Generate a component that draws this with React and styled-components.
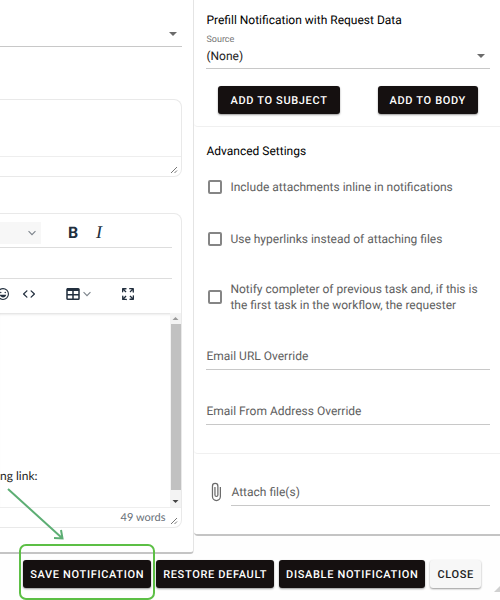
import { useState } from "react";
import styled, { createGlobalStyle } from "styled-components";

const icons = {
    emoji: "M9 11c.6 0 1-.4 1-1s-.4-1-1-1a1 1 0 0 0-1 1c0 .6.4 1 1 1Zm6 0c.6 0 1-.4 1-1s-.4-1-1-1a1 1 0 0 0-1 1c0 .6.4 1 1 1Zm-3 5.5c2.1 0 4-1.5 4.4-3.5H7.6c.5 2 2.3 3.5 4.4 3.5ZM12 4a8 8 0 1 0 0 16 8 8 0 0 0 0-16Zm0 14.5a6.5 6.5 0 1 1 0-13 6.5 6.5 0 0 1 0 13Z",
    code: "M9.8 15.7c.3.3.3.8 0 1-.3.4-.9.4-1.2 0l-4.4-4.1a.8.8 0 0 1 0-1.2l4.4-4.2c.3-.3.9-.3 1.2 0 .3.3.3.8 0 1.1L6 12l3.8 3.7ZM14.2 15.7c-.3.3-.3.8 0 1 .4.4.9.4 1.2 0l4.4-4.1c.3-.3.3-.9 0-1.2l-4.4-4.2a.8.8 0 0 0-1.2 0c-.3.3-.3.8 0 1.1L18 12l-3.8 3.7Z",
    table: "M19 4a2 2 0 0 1 2 2v12a2 2 0 0 1-2 2H5a2 2 0 0 1-2-2V6c0-1.1.9-2 2-2h14ZM5 14v4h6v-4H5Zm14 0h-6v4h6v-4Zm0-6h-6v4h6V8ZM5 12h6V8H5v4Z",
    fullscreen: "m15.3 10-1.2-1.3 2.9-3h-2.3a.9.9 0 1 1 0-1.7H19c.5 0 .9.4.9.9v4.4a.9.9 0 1 1-1.8 0V7l-2.9 3Zm0 4 3 3v-2.3a.9.9 0 1 1 1.7 0V19c0 .5-.4.9-.9.9h-4.4a.9.9 0 1 1 0-1.8H17l-3-2.9 1.3-1.2ZM10 15.4l-2.9 3h2.3a.9.9 0 1 1 0 1.7H5a.9.9 0 0 1-.9-.9v-4.4a.9.9 0 1 1 1.8 0V17l2.9-3 1.2 1.3ZM8.7 10 5.7 7v2.3a.9.9 0 0 1-1.7 0V5c0-.5.4-.9.9-.9h4.4a.9.9 0 0 1 0 1.8H7l3 2.9-1.3 1.2Z",
    clip: "M16.5 6v11.5a4 4 0 0 1-8 0V5a2.5 2.5 0 0 1 5 0v10.5a1 1 0 0 1-2 0V6H10v9.5a2.5 2.5 0 0 0 5 0V5a4 4 0 0 0-8 0v12.5a5.5 5.5 0 0 0 11 0V6h-1.5Z"
};

const options = [
    { id: "inline", text: "Include attachments inline in notifications" },
    { id: "hyperlinks", text: "Use hyperlinks instead of attaching files" },
    { id: "completer", text: "Notify completer of previous task and, if this is the first task in the workflow, the requester" }
];

function Icon({ name, size = 18 }) {
    return (
        <svg width={size} height={size} viewBox="0 0 24 24" fill="currentColor" aria-hidden="true">
            <path d={icons[name]} />
        </svg>
    )
}

function Chevron() {
    return (
        <svg width="8" height="8" viewBox="0 0 10 10" fill="none" stroke="#7d848c" strokeWidth="1.4" aria-hidden="true">
            <path d="M0.7 2.7 5 7.2 9.3 2.7" />
        </svg>
    )
}

function ResizeGrip() {
    return (
        <svg width="8" height="8" viewBox="0 0 8 8" stroke="#777777" aria-hidden="true">
            <path d="M1 7 7 1M4.500 7 7 4.500" />
        </svg>
    )
}

export default function App() {
    const [checked, setChecked] = useState({});

    function toggle(id) {
        setChecked({ ...checked, [id]: !checked[id] });
    }

    return (
        <>
            <GlobalStyle />
            <Columns>
                <MessageCard>
                    <SelectBox>
                        <Select $height={47} aria-label="Recipient"></Select>
                        <Caret />
                    </SelectBox>

                    <SubjectBox>
                        <SubjectInput aria-label="Subject" />
                        <StatusBar><ResizeGrip /></StatusBar>
                    </SubjectBox>

                    <Editor>
                        <Toolbar>
                            <FormatButton aria-label="Paragraph format"><Chevron /></FormatButton>
                            <ToolGroup>
                                <ToolButton aria-label="Bold"><Bold>B</Bold></ToolButton>
                                <ToolButton aria-label="Italic"><Italic>I</Italic></ToolButton>
                            </ToolGroup>
                        </Toolbar>
                        <EmptyToolbar />
                        <InsertToolbar>
                            <ToolGroup>
                                <ToolButton aria-label="Emoticons"><Icon name="emoji" /></ToolButton>
                                <ToolButton aria-label="Source code"><Icon name="code" /></ToolButton>
                            </ToolGroup>
                            <ToolGroup>
                                <ToolButton aria-label="Table"><Icon name="table" /></ToolButton>
                                <Chevron />
                            </ToolGroup>
                            <ToolGroup>
                                <ToolButton aria-label="Fullscreen"><Icon name="fullscreen" /></ToolButton>
                            </ToolGroup>
                        </InsertToolbar>
                        <EditArea>
                            <EditText>ng link:</EditText>
                            <Scrollbar>
                                <ScrollArrow viewBox="0 0 11 11" $color="#9a9a9a"><path d="M2.500 7h6l-3-3z" /></ScrollArrow>
                                <ScrollThumb />
                                <ScrollArrow viewBox="0 0 11 11" $color="#444444"><path d="M2.500 4h6l-3 3z" /></ScrollArrow>
                            </Scrollbar>
                        </EditArea>
                        <StatusBar>49 words<ResizeGrip /></StatusBar>
                    </Editor>
                </MessageCard>

                <Sidebar>
                    <Card>
                        <Title>Prefill Notification with Request Data</Title>
                        <SourceLabel htmlFor="source">Source</SourceLabel>
                        <SelectBox>
                            <Select id="source" $height={23}>
                                <option>(None)</option>
                            </Select>
                            <Caret />
                        </SelectBox>
                        <PrefillButtons>
                            <Button $wide>ADD TO SUBJECT</Button>
                            <Button $wide>ADD TO BODY</Button>
                        </PrefillButtons>
                    </Card>

                    <Card $roomy>
                        <Title>Advanced Settings</Title>
                        <Options>
                            {options.map((item) => (
                                <Option key={item.id}>
                                    <Checkbox type="checkbox" checked={!!checked[item.id]} onChange={() => toggle(item.id)} />
                                    <span>{item.text}</span>
                                </Option>
                            ))}
                        </Options>
                        <Fields>
                            <TextInput placeholder="Email URL Override" aria-label="Email URL Override" />
                            <TextInput placeholder="Email From Address Override" aria-label="Email From Address Override" />
                        </Fields>
                    </Card>

                    <Card $last>
                        <AttachRow>
                            <Icon name="clip" size={20} />
                            <TextInput placeholder="Attach file(s)" aria-label="Attach file(s)" />
                        </AttachRow>
                    </Card>
                </Sidebar>
            </Columns>

            <Footer>
                <Highlight>
                    <Button>SAVE NOTIFICATION</Button>
                    <Arrow viewBox="0 0 60 56" aria-hidden="true">
                        <path d="M1 1 55 50M54 42 55.500 50.500 47 50" />
                    </Arrow>
                </Highlight>
                <Button>RESTORE DEFAULT</Button>
                <Button>DISABLE NOTIFICATION</Button>
                <Button $light>CLOSE</Button>
                <Corner />
            </Footer>
        </>
    )
}

const GlobalStyle = createGlobalStyle`
    * {
        box-sizing: border-box;
    }
    body {
        margin: 0;
        background-color: #FEFEFE;
        font-family: Roboto, sans-serif;
        font-size: 12px;
        color: #222222;
        text-rendering: geometricPrecision;
        overflow-x: hidden;
    }
    button, input, select, textarea {
        font: inherit;
        color: inherit;
        text-rendering: inherit;
    }
    svg {
        display: block;
        flex-shrink: 0;
    }
`

const Columns = styled.div`
    display: grid;
    grid-template-columns: minmax(0, 7fr) minmax(0, 11fr);
    align-items: start;
`

const MessageCard = styled.section`
    padding: 0 11px 24px 0;
    border-right: 1px solid #E4E4E4;
    border-bottom: 2px solid #C4C4C4;
    border-bottom-right-radius: 4px;
    background-color: #FFFFFF;
`

const SelectBox = styled.div`
    position: relative;
`

const Select = styled.select`
    display: block;
    width: 100%;
    height: ${props => props.$height}px;
    padding: 0 0 3px;
    border: none;
    border-bottom: 1px solid #C8C8C8;
    border-radius: 0;
    background: transparent;
    appearance: none;
    outline: none;
`

const Caret = styled.span`
    position: absolute;
    right: 5px;
    bottom: 11px;
    border: 4px solid transparent;
    border-top-color: #6B6B6B;
    border-bottom: none;
    pointer-events: none;
`

const SubjectBox = styled.div`
    margin-top: 52px;
    border: 1px solid #E9E9E9;
    border-left: none;
    border-radius: 0 8px 8px 0;
`

const SubjectInput = styled.textarea`
    display: block;
    width: 100%;
    height: 56px;
    border: none;
    background: transparent;
    resize: none;
    outline: none;
`

const StatusBar = styled.div`
    height: 20px;
    padding: 0 3px 0 0;
    border-top: 1px solid #EEEEEE;
    display: flex;
    justify-content: flex-end;
    align-items: center;
    gap: 5px;
    font-family: Lato, sans-serif;
    font-size: 11px;
    color: #686F77;

    svg {
        align-self: flex-end;
        margin-bottom: 2px;
    }
`

const Editor = styled.div`
    margin-top: 36px;
    border: 1px solid #E9E9E9;
    border-left: none;
    border-radius: 0 8px 8px 0;
    overflow: hidden;
`

const Toolbar = styled.div`
    height: 34px;
    margin-right: 9px;
    padding-top: 4px;
    border-bottom: 1px solid #DDDDDD;
    display: flex;
    align-items: center;
    gap: 19px;
`

const EmptyToolbar = styled.div`
    height: 31px;
    margin-right: 9px;
    border-bottom: 1px solid #DDDDDD;
`

const InsertToolbar = styled.div`
    height: 34px;
    margin-left: -10px;
    padding-bottom: 4px;
    display: flex;
    align-items: center;
    gap: 18px;
`

const ToolGroup = styled.div`
    display: flex;
    align-items: center;

    & > svg {
        margin: 0 6px 0 -3px;
    }
`

const ToolButton = styled.button`
    width: 26px;
    height: 22px;
    padding: 0;
    border: none;
    background: transparent;
    display: flex;
    justify-content: center;
    align-items: center;
    color: #222F3E;
`

const FormatButton = styled(ToolButton)`
    width: 41px;
    padding-right: 5px;
    justify-content: flex-end;
    background-color: #F7F7F7;
`

const Bold = styled.strong`
    font-size: 16px;
    font-weight: 700;
`

const Italic = styled.em`
    font-family: "Liberation Serif", serif;
    font-size: 18px;
`

const EditArea = styled.div`
    height: 194px;
    box-shadow: inset 0 3px 3px -2px #DADADA;
    display: flex;
    justify-content: space-between;
`

const EditText = styled.p`
    margin: 0;
    padding-bottom: 22px;
    align-self: flex-end;
    font-family: Lato, sans-serif;
    line-height: 18px;
`

const Scrollbar = styled.div`
    width: 11px;
    background-color: #F3F3F3;
    display: flex;
    flex-direction: column;
    align-items: center;
`

const ScrollArrow = styled.svg`
    width: 11px;
    height: 11px;
    fill: ${props => props.$color};
`

const ScrollThumb = styled.div`
    width: 10px;
    margin-bottom: 6px;
    flex: 1;
    background-color: #C1C1C1;
`

const Sidebar = styled.aside`
    min-width: 0;
`

const Card = styled.section`
    padding: ${props => props.$roomy ? 14 : 10}px 10px 12px 12px;
    border-bottom: ${props => props.$last ? "2px solid #C4C4C4" : "1px solid #F0F0F0"};
    border-bottom-left-radius: 4px;
    background-color: #FFFFFF;
`

const Title = styled.h2`
    margin: 0;
    font-size: 12px;
    line-height: 20px;
    font-weight: 400;
    color: #000000;
`

const SourceLabel = styled.label`
    display: block;
    margin-top: 4px;
    font-size: 9px;
    line-height: 12px;
    color: #757575;
`

const PrefillButtons = styled.div`
    margin-top: 17px;
    padding: 0 12px;
    display: flex;
    justify-content: space-between;
`

const Button = styled.button`
    height: 28px;
    padding: 0 ${props => props.$wide ? 12 : 7}px;
    border: none;
    border-radius: 3px;
    background-color: ${props => props.$light ? "#F7F7F7" : "#151010"};
    box-shadow: 0 1px 2px rgba(0, 0, 0, 0.4);
    font-size: 11px;
    font-weight: 500;
    letter-spacing: 0.06em;
    white-space: nowrap;
    color: ${props => props.$light ? "#222222" : "#FFFFFF"};
`

const Options = styled.div`
    padding: 16px 0 0 2px;
    display: flex;
    flex-direction: column;
    gap: 32px;
`

const Option = styled.label`
    min-height: 20px;
    display: flex;
    align-items: center;
    gap: 8px;
    line-height: 16px;
    color: #606060;
`

const Checkbox = styled.input`
    width: 14px;
    height: 14px;
    margin: 0;
    flex-shrink: 0;
    border: 2px solid #858585;
    border-radius: 2px;
    appearance: none;

    &:checked {
        background-color: #151010;
    }
`

const Fields = styled.div`
    padding: 29px 0 16px;
    display: flex;
    flex-direction: column;
    gap: 27px;
`

const TextInput = styled.input`
    width: 100%;
    height: 28px;
    min-width: 0;
    padding: 0;
    border: none;
    border-bottom: 1px solid #C8C8C8;
    background: transparent;
    outline: none;

    &::placeholder {
        color: #606060;
        opacity: 1;
    }
`

const AttachRow = styled.div`
    padding: 14px 0 16px;
    display: flex;
    align-items: center;
    gap: 5px;
    color: #6B6B6B;
`

const Footer = styled.footer`
    position: relative;
    padding: 6px 19px 12px;
    display: flex;
    justify-content: flex-end;
    gap: 5px;
`

/* green callout drawn around the save button */
const Highlight = styled.div`
    position: relative;

    &::after {
        content: "";
        position: absolute;
        inset: -16px -4px -12px;
        border: 2px solid #5CBF45;
        border-radius: 7px;
        pointer-events: none;
    }
`

const Arrow = styled.svg`
    position: absolute;
    left: -16px;
    top: -72px;
    width: 60px;
    height: 56px;
    fill: none;
    stroke: #5DAE74;
    stroke-width: 2;
    pointer-events: none;
`

const Corner = styled.span`
    position: absolute;
    right: 0;
    bottom: 8px;
    border: 3px solid #D0D0D0;
    border-top-color: transparent;
    border-left-color: transparent;
`
